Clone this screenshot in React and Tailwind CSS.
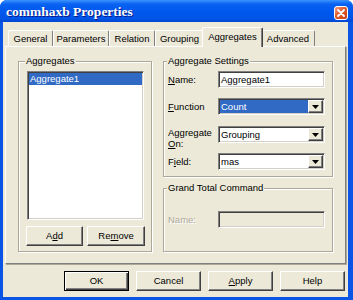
import React from "react";

const raised =
  "border border-t-white border-l-white border-r-[#404040] border-b-[#404040] shadow-[inset_-1px_-1px_0_#808080]";
const sunken =
  "border border-t-[#808080] border-l-[#808080] border-r-white border-b-white shadow-[inset_1px_1px_0_#404040,inset_-1px_-1px_0_#d4d0c8]";
const etched =
  "border border-[#aca899] shadow-[inset_1px_1px_0_#ffffff,1px_1px_0_#ffffff]";

function Tab({ label, w, selected }) {
  if (selected) {
    return (
      <div
        className={`relative z-10 -mx-[2px] -mb-[1px] h-[20px] w-[61px] flex items-center justify-center pb-[2px] bg-[#ece9d8] border-t border-l border-t-white border-l-white border-r border-r-[#404040] shadow-[inset_-1px_0_0_#808080] rounded-t-[2px]`}
      >
        {label}
      </div>
    );
  }
  return (
    <div
      className="h-[16px] flex items-center justify-center border-t border-l border-t-white border-l-white border-r border-r-[#808080] rounded-t-[2px]"
      style={{ width: w }}
    >
      {label}
    </div>
  );
}

function Combo({ value, selected }) {
  return (
    <div className={`w-[107px] h-[17px] bg-white ${sunken} p-[1px] flex`}>
      <div
        className={`flex-1 h-full flex items-center pl-[1px] ${
          selected ? "bg-[#316ac5] text-white" : ""
        }`}
      >
        {value}
      </div>
      <div className={`w-[15px] h-full bg-[#ece9d8] ${raised} flex items-center justify-center`}>
        <svg width="7" height="4" viewBox="0 0 7 4">
          <polygon points="0,0 7,0 3.5,4" fill="#000" />
        </svg>
      </div>
    </div>
  );
}

function U({ children }) {
  return <span className="underline underline-offset-[1px]">{children}</span>;
}

export default function App() {
  return (
    <div className="w-[353px] h-[300px] bg-[#0a55e6] rounded-t-[7px] flex flex-col overflow-hidden font-['Liberation_Sans',Arial,sans-serif] text-[9.5px] text-black leading-[12px]">
      {/* title bar */}
      <div className="h-[22px] shrink-0 flex items-start pl-[6px] pr-[5px] bg-[linear-gradient(180deg,#3d95ff_0%,#0a62f2_18%,#0058ee_50%,#0054e8_85%,#0046d0_100%)]">
        <span className="mt-[4px] font-['Liberation_Serif',serif] font-bold text-[13.5px] leading-[16px] text-white [text-shadow:1px_1px_0_#0a1883]">
          commhaxb Properties
        </span>
        <div className="ml-auto mt-[6px] w-[14px] h-[14px] rounded-[3px] border border-white bg-[linear-gradient(135deg,#f49a7c_0%,#e35a2c_45%,#c8401a_100%)] flex items-center justify-center">
          <svg width="8" height="8" viewBox="0 0 8 8">
            <path d="M1 1 L7 7 M7 1 L1 7" stroke="#fff" strokeWidth="1.8" strokeLinecap="round" />
          </svg>
        </div>
      </div>

      {/* body */}
      <div className="flex-1 ml-[3px] mr-[5px] mb-[3px] bg-[#ece9d8] flex flex-col">
        {/* tabs */}
        <div className="h-[24px] pt-[5px] pl-[5px] flex items-end">
          <Tab label="General" w={45} />
          <Tab label="Parameters" w={56} />
          <Tab label="Relation" w={46} />
          <Tab label="Grouping" w={49} />
          <Tab label="Aggregates" selected />
          <Tab label="Advanced" w={54} />
        </div>

        {/* panel */}
        <div className="h-[218px] mx-[2px] border border-t-white border-l-white border-r-[#808080] border-b-[#808080] shadow-[1px_1px_0_#aca899] pt-[14px] pl-[12px] flex gap-[11px]">
          {/* left group */}
          <div className={`relative w-[134px] h-[191px] ${etched} pt-[9px] pl-[7px]`}>
            <span className="absolute left-[6px] -top-[7px] px-[1px] bg-[#ece9d8]">Aggregates</span>
            <div className={`ml-[1px] w-[117px] h-[149px] bg-white ${sunken} p-[1px]`}>
              <div className="h-[12px] bg-[#316ac5] text-white pl-[1px] flex items-center">
                Aggregate1
              </div>
            </div>
            <div className="mt-[6px] flex gap-[4px]">
              <div className={`w-[57px] h-[20px] ${raised} flex items-center justify-center`}>
                A<U>d</U>d
              </div>
              <div className={`w-[58px] h-[20px] ${raised} flex items-center justify-center`}>
                Re<U>m</U>ove
              </div>
            </div>
          </div>

          {/* right column */}
          <div className="w-[170px] flex flex-col">
            <div className={`relative h-[116px] ${etched} pt-[9px] pl-[4px]`}>
              <span className="absolute left-[3px] -top-[7px] px-[1px] bg-[#ece9d8]">
                Aggregate Settings
              </span>
              <div className="h-[17px] flex items-center">
                <div className="w-[50px]">
                  <U>N</U>ame:
                </div>
                <div className={`w-[107px] h-[17px] bg-white ${sunken} pl-[2px] flex items-center`}>
                  Aggregate1
                </div>
              </div>
              <div className="mt-[10px] h-[17px] flex items-center">
                <div className="w-[50px]">
                  <U>F</U>unction
                </div>
                <Combo value="Count" selected />
              </div>
              <div className="mt-[11px] h-[17px] flex items-start">
                <div className="w-[50px] leading-[11px] pt-[1px]">
                  Aggregate
                  <br />
                  <U>O</U>n:
                </div>
                <Combo value="Grouping" />
              </div>
              <div className="mt-[10px] h-[17px] flex items-center">
                <div className="w-[50px]">
                  F<U>i</U>eld:
                </div>
                <Combo value="mas" />
              </div>
            </div>

            <div className={`relative mt-[11px] h-[64px] ${etched} pt-[22px] pl-[4px]`}>
              <span className="absolute left-[3px] -top-[7px] px-[1px] bg-[#ece9d8]">
                Grand Total Command
              </span>
              <div className="h-[17px] flex items-center">
                <div className="w-[50px] text-[#aca899] [text-shadow:1px_1px_0_#ffffff]">
                  Name:
                </div>
                <div className={`w-[107px] h-[17px] bg-[#ece9d8] ${sunken}`} />
              </div>
            </div>
          </div>
        </div>

        {/* bottom buttons */}
        <div className="mt-[7px] flex justify-end gap-[7px] pr-[3px]">
          <div className="w-[65px] h-[20px] border border-black shadow-[inset_1px_1px_0_#ffffff,inset_-1px_-1px_0_#404040,inset_-2px_-2px_0_#808080] flex items-center justify-center">
            OK
          </div>
          <div className={`w-[65px] h-[20px] ${raised} flex items-center justify-center`}>Cancel</div>
          <div className={`w-[65px] h-[20px] ${raised} flex items-center justify-center`}>
            <U>A</U>pply
          </div>
          <div className={`w-[65px] h-[20px] ${raised} flex items-center justify-center`}>Help</div>
        </div>
      </div>
    </div>
  );
}
